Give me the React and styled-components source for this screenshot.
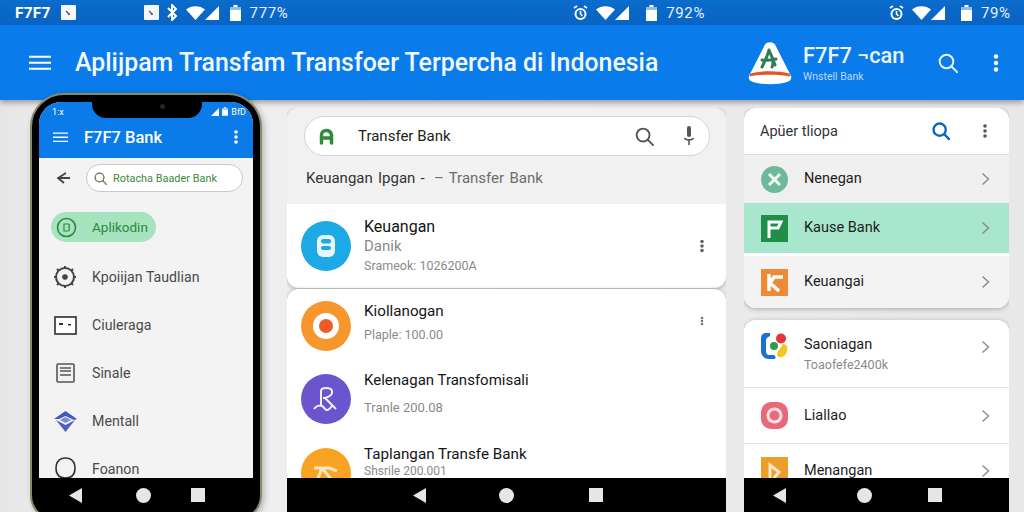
import React from "react";
import styled, { createGlobalStyle } from "styled-components";

const GlobalStyle = createGlobalStyle`
  html, body {
    margin: 0;
    padding: 0;
    height: 512px;
    overflow: hidden;
    background: #ebebeb;
    font-family: Roboto, "Liberation Sans", sans-serif;
  }
  * { box-sizing: border-box; }
`;

const Page = styled.div`
  width: 1024px;
  height: 512px;
  display: flex;
  flex-direction: column;
  background: linear-gradient(90deg, #e6e6e6, #f0f0f0 8%, #ececec 50%, #e8e8e8);
`;

/* top status strip */
const StatusBar = styled.div`
  height: 25px;
  flex: none;
  display: flex;
  align-items: center;
  background: linear-gradient(180deg, #0a6ccb, #0a63c2);
  color: #fff;
  position: relative;
  z-index: 2;
`;

const StatusGroup = styled.div`
  display: flex;
  align-items: center;
  gap: ${(p) => p.$gap || 0}px;
  margin-left: ${(p) => p.$left || 0}px;
`;

const Carrier = styled.span`
  font-size: 15.5px;
  font-weight: 700;
  letter-spacing: 0.2px;
`;

const Percent = styled.span`
  font-size: 15px;
  letter-spacing: 0.6px;
  color: #e8f2fd;
  margin-left: 9px;
`;

/* app bar */
const AppBar = styled.header`
  height: 75px;
  flex: none;
  display: flex;
  align-items: center;
  padding: 0 0 0 29px;
  background: #0a7beb;
  color: #fff;
  box-shadow: 0 2px 6px rgba(0, 0, 0, 0.4);
  position: relative;
  z-index: 1;
`;

const Title = styled.h1`
  margin: 0 0 0 24px;
  width: 673px;
  font-size: 24.9px;
  font-weight: 500;
  white-space: nowrap;
  color: #f2f8ff;
`;

const Brand = styled.div`
  display: flex;
  flex-direction: column;
  margin-left: 11px;
  width: 135px;
`;

const BrandName = styled.span`
  font-size: 21.8px;
  line-height: 25px;
  font-weight: 500;
  white-space: nowrap;
  color: #eaf4ff;
`;

const BrandSub = styled.span`
  font-size: 10.5px;
  line-height: 13px;
  margin-top: 2px;
  color: #b9dafc;
  white-space: nowrap;
`;

const BarIcons = styled.div`
  display: flex;
  align-items: center;
  gap: 34px;
`;

/* three columns under the bar */
const Main = styled.main`
  flex: 1;
  display: flex;
  min-height: 0;
  padding-left: 30px;
`;

const Phone = styled.section`
  width: 232px;
  height: 428px;
  flex: none;
  margin-top: -7px;
  border: 2px solid #8b8a66;
  border-radius: 34px 34px 26px 26px;
  background: #000;
  padding: 7px;
  position: relative;
  z-index: 3;
  box-shadow: 2px 2px 6px rgba(0, 0, 0, 0.25);
`;

const Screen = styled.div`
  height: 100%;
  display: flex;
  flex-direction: column;
  background: #f3f3f3;
  border-radius: 22px 22px 0 0;
  overflow: hidden;
`;

const Notch = styled.div`
  position: absolute;
  top: 0;
  left: 60px;
  width: 110px;
  height: 23px;
  background: #000;
  border-radius: 0 0 14px 14px;
  display: flex;
  align-items: center;
  justify-content: center;
  padding-left: 30px;
`;

const Lens = styled.span`
  width: 5px;
  height: 5px;
  border-radius: 50%;
  background: #1c2733;
`;

const PhoneHead = styled.div`
  flex: none;
  height: 56px;
  background: #0a7be8;
  color: #fff;
  display: flex;
  flex-direction: column;
`;

const PhoneStatus = styled.div`
  height: 18px;
  padding: 1px 7px 0 13px;
  display: flex;
  align-items: center;
  justify-content: space-between;
  font-size: 9px;
`;

const PhoneBar = styled.div`
  flex: 1;
  display: flex;
  align-items: center;
  padding: 0 13px 4px 14px;
`;

const PhoneTitle = styled.span`
  margin-left: 16px;
  flex: 1;
  font-size: 16.5px;
  font-weight: 500;
`;

const PhoneList = styled.div`
  flex: 1;
  min-height: 0;
  overflow: hidden;
  padding-top: 6px;
`;

const SearchRow = styled.div`
  display: flex;
  align-items: center;
  padding: 0 10px 0 17px;
  gap: 15px;
`;

const MiniSearch = styled.div`
  flex: 1;
  height: 28px;
  display: flex;
  align-items: center;
  gap: 6px;
  padding-left: 7px;
  border: 1px solid #c9c9c9;
  border-radius: 14px;
  background: #fff;
  font-size: 10.9px;
  color: #3f8a3c;
  white-space: nowrap;
`;

const ActivePill = styled.div`
  width: 105px;
  height: 30px;
  margin: 20px 0 11px 12px;
  display: flex;
  align-items: center;
  gap: 15px;
  padding-left: 5px;
  border-radius: 15px;
  background: #a7e3bf;
  color: #2b8a3e;
  font-size: 13.5px;
`;

const NavRow = styled.div`
  height: 48px;
  display: flex;
  align-items: center;
  gap: 15px;
  padding-left: 14px;
  font-size: 14.2px;
  color: #4a4a4a;
  white-space: nowrap;
`;

const IconBox = styled.span`
  width: 24px;
  display: flex;
  justify-content: center;
  flex: none;
`;

const SoftNav = styled.nav`
  flex: none;
  height: 34px;
  background: #000;
  display: flex;
  align-items: center;
  padding-left: ${(p) => p.$left}px;
  gap: ${(p) => p.$gap}px;
  svg:last-child {
    margin-left: ${(p) => p.$lastGap - p.$gap}px;
  }
`;

const Column = styled.section`
  width: ${(p) => p.$width}px;
  margin-left: ${(p) => p.$left}px;
  flex: none;
  display: flex;
  flex-direction: column;
  padding-top: 8px;
  min-height: 0;
`;

const Stack = styled.div`
  flex: 1;
  min-height: 0;
  overflow: hidden;
  display: flex;
  flex-direction: column;
  gap: ${(p) => p.$gap}px;
`;

const Card = styled.div`
  flex: ${(p) => (p.$grow ? 1 : "none")};
  background: #fff;
  border-radius: ${(p) => (p.$grow ? "12px 12px 0 0" : "12px")};
  overflow: hidden;
  box-shadow: 0 1px 5px rgba(0, 0, 0, 0.28);
  min-height: 0;
`;

const SearchArea = styled.div`
  height: 96px;
  padding: 8px 16px 0 17px;
  background: #f1f1f1;
`;

const SearchPill = styled.div`
  height: 40px;
  display: flex;
  align-items: center;
  padding: 0 14px;
  border: 1px solid #d4d4d4;
  border-radius: 20px;
  background: #fff;
`;

const SearchText = styled.span`
  flex: 1;
  margin-left: 24px;
  font-size: 15px;
  color: #222;
`;

const Spacer = styled.span`
  width: ${(p) => p.$w}px;
  flex: none;
`;

const Crumb = styled.div`
  margin: 13px 0 0 2px;
  font-size: 15px;
  color: #333;
  word-spacing: 1.5px;
  span { color: #6d6d6d; margin-left: 4px; }
`;

const Item = styled.div`
  height: ${(p) => p.$height}px;
  display: flex;
  align-items: ${(p) => (p.$top ? "flex-start" : "center")};
  padding: 0 20px 0 14px;
  gap: 13px;
`;

const Avatar = styled.span`
  width: 50px;
  height: 50px;
  margin-top: ${(p) => p.$top || 0}px;
  border-radius: 50%;
  background: ${(p) => p.$color};
  display: flex;
  align-items: center;
  justify-content: center;
  flex: none;
`;

const ItemBody = styled.div`
  flex: 1;
  margin-top: ${(p) => p.$top || 0}px;
  display: flex;
  flex-direction: column;
  white-space: nowrap;
`;

const ItemTitle = styled.span`
  font-size: ${(p) => p.$size || 16}px;
  line-height: 20px;
  color: #151515;
`;

const ItemSub = styled.span`
  font-size: ${(p) => p.$size || 12.5}px;
  line-height: ${(p) => p.$line || 18}px;
  margin-top: ${(p) => p.$gap || 0}px;
  color: ${(p) => p.$color || "#8a8a8a"};
`;

const DotsSlot = styled.span`
  display: flex;
  margin-top: ${(p) => p.$top || 0}px;
`;

const PanelHead = styled.div`
  height: 47px;
  display: flex;
  align-items: center;
  padding: 0 20px 0 16px;
  border-bottom: 1px solid #dedede;
`;

const PanelTitle = styled.span`
  flex: 1;
  font-size: 14.5px;
  color: #333;
`;

const PanelRow = styled.div`
  height: ${(p) => p.$height}px;
  margin-top: ${(p) => p.$above || 0}px;
  display: flex;
  align-items: center;
  gap: 16px;
  padding: 0 19px ${(p) => p.$under || 0}px 17px;
  background: ${(p) => p.$bg || "#fff"};
  border-top: ${(p) => (p.$line ? "1px solid #e4e4e4" : "none")};
`;

const PanelIcon = styled.span`
  width: 27px;
  height: 27px;
  flex: none;
  display: flex;
  align-items: center;
  justify-content: center;
  background: ${(p) => p.$color || "transparent"};
  border-radius: ${(p) => p.$radius || 0}px;
`;

const RowBody = styled.div`
  flex: 1;
  margin-top: ${(p) => p.$top || 0}px;
  display: flex;
  flex-direction: column;
  white-space: nowrap;
`;

const RowTitle = styled.span`
  font-size: 14.5px;
  line-height: 18px;
  color: #1d1d1d;
`;

/* icons */
const Menu = ({ size = 22, w = 2 }) => (
  <svg width={size} height={size * 0.7} viewBox="0 0 22 15" fill="none" stroke="currentColor" strokeWidth={w}>
    <path d="M0 1.5h22M0 7.5h22M0 13.5h22" />
  </svg>
);

const Dots = ({ color = "currentColor", r = 2.2, h = 18, gap = 6.5 }) => (
  <svg width="8" height={h} viewBox={`0 0 8 ${h}`} fill={color}>
    <circle cx="4" cy={h / 2 - gap} r={r} />
    <circle cx="4" cy={h / 2} r={r} />
    <circle cx="4" cy={h / 2 + gap} r={r} />
  </svg>
);

const Search = ({ size = 20, color = "currentColor", w = 2 }) => (
  <svg width={size} height={size} viewBox="0 0 20 20" fill="none" stroke={color} strokeWidth={w} strokeLinecap="round">
    <circle cx="8.5" cy="8.5" r="6.8" />
    <path d="M13.5 13.5 19 19" />
  </svg>
);

const Chevron = () => (
  <svg width="9" height="14" viewBox="0 0 9 14" fill="none" stroke="#8b8b8b" strokeWidth="1.4">
    <path d="M1.5 1.5 7.5 7l-6 5.5" />
  </svg>
);

const Wifi = () => (
  <svg width="19" height="14" viewBox="0 0 19 14" fill="#fff">
    <path d="M0 3.5C5-1 14-1 19 3.5L9.5 14z" />
  </svg>
);

const Signal = () => (
  <svg width="14" height="14" viewBox="0 0 14 14" fill="#fff">
    <path d="M14 0v14H0z" />
  </svg>
);

const Battery = ({ w = 11, h = 16 }) => (
  <svg width={w} height={h} viewBox="0 0 11 16">
    <path d="M3.5 0h4v2h3.5v14H0V2h3.5z" fill="#fff" />
    <path d="M0 2h11v3H0z" fill="#8fbcec" />
  </svg>
);

const Chip = () => (
  <svg width="15" height="15" viewBox="0 0 15 15">
    <rect width="15" height="15" rx="1" fill="#f4f8fc" />
    <path d="M5 6l2 2 1 2M7 9h2" stroke="#44566a" strokeWidth="1.3" fill="none" />
  </svg>
);

const Bluetooth = () => (
  <svg width="12" height="17" viewBox="0 0 12 17" fill="none" stroke="#fff" strokeWidth="2">
    <path d="M2 4l8 8-4 4V1l4 4-8 8" />
  </svg>
);

const Alarm = () => (
  <svg width="15" height="16" viewBox="0 0 15 16" fill="none" stroke="#fff" strokeWidth="2">
    <circle cx="7.5" cy="9" r="5" />
    <path d="M1 3l3-2M14 3l-3-2M7.5 6v3l2 2" strokeWidth="1.6" />
  </svg>
);

const Logo = () => (
  <svg width="44" height="44" viewBox="0 0 44 44">
    <path d="M17 3.5C19 .5 25 .5 27 3.5L43 35c1 3-1 5-4 6-10 3-24 3-34 0-3-1-5-3-4-6z" fill="#fff" />
    <path d="M2.5 32.5C14 29.5 30 29.5 41.5 32.5l1 3C30 33 14 33 1.5 35.5z" fill="#e4552b" />
    <path d="M21 9c-1 5-4 11-7 17M21 9c2 5 4 9 6 15M14 19c4 1 9 0 14-1M25 18c0 3 0 7-1 8" fill="none" stroke="#2f7d57" strokeWidth="3" strokeLinecap="round" />
  </svg>
);

const Mic = () => (
  <svg width="12" height="22" viewBox="0 0 12 22" fill="none">
    <rect x="4" y="1" width="4" height="11" rx="2" fill="#555" />
    <path d="M1.5 13c1 2.5 8 2.5 9 0M6 15.5V20" stroke="#555" strokeWidth="1.6" />
  </svg>
);

const Back = () => <svg width="13" height="15" viewBox="0 0 13 15"><path d="M13 0v15L0 7.5z" fill="#e6e6e6" /></svg>;
const Home = () => <svg width="15" height="15" viewBox="0 0 15 15"><circle cx="7.5" cy="7.5" r="7.5" fill="#e6e6e6" /></svg>;
const Recent = () => <svg width="14" height="14" viewBox="0 0 14 14"><rect width="14" height="14" fill="#e6e6e6" /></svg>;

const Buttons = ({ left, gap, lastGap }) => (
  <SoftNav $left={left} $gap={gap} $lastGap={lastGap}>
    <Back />
    <Home />
    <Recent />
  </SoftNav>
);

const StatusIcons = ({ first, label, left, wifiLeft = 8, batteryLeft = 9 }) => (
  <StatusGroup $left={left}>
    {first}
    <StatusGroup $left={wifiLeft}><Wifi /></StatusGroup>
    <Signal />
    <StatusGroup $left={batteryLeft}><Battery /></StatusGroup>
    <Percent>{label}</Percent>
  </StatusGroup>
);

const navItems = [
  {
    label: "Kpoiijan Taudlian",
    icon: (
      <svg width="24" height="24" viewBox="0 0 24 24" fill="none" stroke="#444" strokeWidth="2">
        <circle cx="12" cy="12" r="9" />
        <circle cx="12" cy="12" r="1.8" fill="#444" />
        <path d="M12 1v2M12 21v2M1 12h2M21 12h2M4 4l2 2M18 18l2 2M4 20l2-2M18 6l2-2" />
      </svg>
    ),
  },
  {
    label: "Ciuleraga",
    icon: (
      <svg width="23" height="19" viewBox="0 0 23 19">
        <rect x="1" y="1" width="21" height="17" fill="#fff" stroke="#444" strokeWidth="1.8" />
        <path d="M5 7h4v2H5zM14 8h3v1.5h-3z" fill="#333" />
      </svg>
    ),
  },
  {
    label: "Sinale",
    icon: (
      <svg width="19" height="20" viewBox="0 0 19 20" fill="none" stroke="#555" strokeWidth="1.6">
        <rect x="1" y="1" width="17" height="18" rx="1" />
        <path d="M4 5h11M4 8h11M4 12h11" />
      </svg>
    ),
  },
  {
    label: "Mentall",
    icon: (
      <svg width="23" height="21" viewBox="0 0 23 21">
        <path d="M11.5 0 23 8l-3 1-8.5-4L5 8 0 8z" fill="#4657b5" />
        <path d="M2 9l9.5 5L21 9l-9.5 12z" fill="#4a5fc4" />
        <path d="M6 9l5.5-3L17 9l-5.5 3z" fill="#7d8ad6" />
      </svg>
    ),
  },
  {
    label: "Foanon",
    icon: (
      <svg width="21" height="24" viewBox="0 0 21 24" fill="none" stroke="#333" strokeWidth="1.6">
        <path d="M7 1.5C3 3 1 6 1 11c0 6 3 10 9.5 10S20 17 20 11c0-5-2-8-6-9.5-2-.5-5-.5-7 0z" />
      </svg>
    ),
  },
];

export default function App() {
  return (
    <Page>
      <GlobalStyle />
      <StatusBar>
        <StatusGroup $left={15}><Carrier>F7F7</Carrier></StatusGroup>
        <StatusGroup $left={10}><Chip /></StatusGroup>
        <StatusGroup $left={68}><Chip /></StatusGroup>
        <StatusIcons left={7} first={<Bluetooth />} label="777%" batteryLeft={11} />
        <StatusIcons left={285} first={<Alarm />} label="792%" batteryLeft={17} />
        <StatusIcons left={184} first={<Alarm />} label="79%" batteryLeft={16} />
      </StatusBar>

      <AppBar>
        <Menu />
        <Title>Aplijpam Transfam Transfoer Terpercha di Indonesia</Title>
        <Logo />
        <Brand>
          <BrandName>F7F7 ¬can</BrandName>
          <BrandSub>Wnstell Bank</BrandSub>
        </Brand>
        <BarIcons>
          <Search size={20} color="#eaf4ff" />
          <Dots />
        </BarIcons>
      </AppBar>

      <Main>
        <Phone>
          <Notch><Lens /></Notch>
          <Screen>
            <PhoneHead>
              <PhoneStatus>
                <span>1:x</span>
                <StatusGroup $gap={3}>
                  <svg width="8" height="8" viewBox="0 0 8 8"><path d="M8 0v8H0z" fill="#fff" /></svg>
                  <Battery w={6} h={9} />
                  <span>BfD</span>
                </StatusGroup>
              </PhoneStatus>
              <PhoneBar>
                <Menu size={15} w={2} />
                <PhoneTitle>F7F7 Bank</PhoneTitle>
                <Dots r={1.8} h={14} gap={5} />
              </PhoneBar>
            </PhoneHead>
            <PhoneList>
              <SearchRow>
                <svg width="15" height="12" viewBox="0 0 15 12" fill="none" stroke="#444" strokeWidth="1.8">
                  <path d="M10 1 2 6l6 5M2 6h12" />
                </svg>
                <MiniSearch>
                  <Search size={13} color="#7a6a4a" w={2} />
                  Rotacha Baader Bank
                </MiniSearch>
              </SearchRow>
              <ActivePill>
                <svg width="21" height="21" viewBox="0 0 21 21" fill="none" stroke="#2b8a3e" strokeWidth="1.6">
                  <circle cx="10.5" cy="10.5" r="9" />
                  <path d="M8 7h4c2 0 2 3 0 3.5 2 0 2 3.5 0 3.5H8z" strokeWidth="1.2" />
                </svg>
                Aplikodin
              </ActivePill>
              {navItems.map((item) => (
                <NavRow key={item.label}>
                  <IconBox>{item.icon}</IconBox>
                  {item.label}
                </NavRow>
              ))}
            </PhoneList>
            <Buttons left={30} gap={54} lastGap={40} />
          </Screen>
        </Phone>

        <Column $width={439} $left={25}>
          <Stack $gap={1}>
            <Card>
              <SearchArea>
                <SearchPill>
                  <svg width="15" height="17" viewBox="0 0 15 17" fill="none" stroke="#2e8b3a" strokeWidth="3.5" strokeLinecap="round">
                    <path d="M2.5 15V7c0-6 9-6 10 0v8M3 10h9" />
                  </svg>
                  <SearchText>Transfer Bank</SearchText>
                  <Search size={19} color="#555" />
                  <Spacer $w={29} />
                  <Mic />
                </SearchPill>
                <Crumb>Keuangan Ipgan - <span>– Transfer Bank</span></Crumb>
              </SearchArea>
              <Item $height={84}>
                <Avatar $color="#1da8e6">
                  <svg width="20" height="24" viewBox="0 0 20 24" fill="none">
                    <rect x="1" y="1" width="18" height="22" rx="6" fill="#e7f6fc" />
                    <rect x="5" y="5" width="10" height="4.5" rx="2" fill="#1da8e6" />
                    <rect x="5" y="12" width="10" height="4" rx="2" fill="#1da8e6" />
                  </svg>
                </Avatar>
                <ItemBody>
                  <ItemTitle>Keuangan</ItemTitle>
                  <ItemSub $size={15}>Danik</ItemSub>
                  <ItemSub $gap={2}>Srameok: 1026200A</ItemSub>
                </ItemBody>
                <Dots color="#666" r={1.8} h={14} gap={4.5} />
              </Item>
            </Card>
            <Card $grow>
              <Item $height={85} $top>
                <Avatar $color="#f7962c" $top={12}>
                  <svg width="26" height="26" viewBox="0 0 26 26">
                    <circle cx="13" cy="13" r="13" fill="#fff" />
                    <circle cx="13" cy="13" r="7" fill="#ee5a2a" />
                  </svg>
                </Avatar>
                <ItemBody $top={12}>
                  <ItemTitle $size={15.2}>Kiollanogan</ItemTitle>
                  <ItemSub $gap={5}>Plaple: 100.00</ItemSub>
                </ItemBody>
                <DotsSlot $top={26}>
                  <Dots color="#777" r={1.3} h={12} gap={3} />
                </DotsSlot>
              </Item>
              <Item $height={74} $top>
                <Avatar $color="#6a55cf">
                  <svg width="28" height="28" viewBox="0 0 28 28" fill="none" stroke="#f2efff" strokeWidth="2">
                    <path d="M9 21V6c0-4 10-4 11 0 1 5-6 7-9 7M13 13l11 11M2 24c3-4 8-5 11 0 2 2 4 1 7-3" />
                  </svg>
                </Avatar>
                <ItemBody $top={-4}>
                  <ItemTitle $size={15}>Kelenagan Transfomisali</ItemTitle>
                  <ItemSub $size={13} $gap={9}>Tranle 200.08</ItemSub>
                </ItemBody>
              </Item>
              <Item $height={50} $top>
                <Avatar $color="#f8a422">
                  <svg width="30" height="26" viewBox="0 0 30 26" fill="none" stroke="#fbe5bd" strokeWidth="3">
                    <path d="M3 8h15l8 3M11 8 5 24M11 8l13 16" />
                  </svg>
                </Avatar>
                <ItemBody $top={-4}>
                  <ItemTitle $size={15.2}>Taplangan Transfe Bank</ItemTitle>
                  <ItemSub $size={12} $line={13} $gap={1}>Shsrile 200.001</ItemSub>
                </ItemBody>
              </Item>
            </Card>
          </Stack>
          <Buttons left={126} gap={73} lastGap={75} />
        </Column>

        <Column $width={265} $left={18}>
          <Stack $gap={12}>
            <Card>
              <PanelHead>
                <PanelTitle>Apüer tliopa</PanelTitle>
                <Search size={18} color="#0b63c5" w={2.6} />
                <Spacer $w={31} />
                <Dots color="#555" r={1.8} h={14} gap={5} />
              </PanelHead>
              <PanelRow $height={48} $bg="#f0f0f0">
                <PanelIcon $color="#6fb89c" $radius={14}>
                  <svg width="15" height="15" viewBox="0 0 15 15" stroke="#eef8f3" strokeWidth="3" fill="none"><path d="M2 2l11 11M13 2 2 13" /></svg>
                </PanelIcon>
                <RowBody><RowTitle>Nenegan</RowTitle></RowBody>
                <Chevron />
              </PanelRow>
              <PanelRow $height={50} $bg="#a9e6ce">
                <PanelIcon $color="#1f8e48">
                  <svg width="17" height="19" viewBox="0 0 17 19" fill="none" stroke="#fff" strokeWidth="3">
                    <path d="M3 19V3h12l-3 6H3" />
                  </svg>
                </PanelIcon>
                <RowBody><RowTitle>Kause Bank</RowTitle></RowBody>
                <Chevron />
              </PanelRow>
              <PanelRow $height={52} $bg="#f3f3f3" $above={3}>
                <PanelIcon $color="#ec8a35">
                  <svg width="19" height="19" viewBox="0 0 19 19" fill="none" stroke="#fff" strokeWidth="3.5">
                    <path d="M4 1v17M18 4H9L5 10l9 8" />
                  </svg>
                </PanelIcon>
                <RowBody><RowTitle>Keuangai</RowTitle></RowBody>
                <Chevron />
              </PanelRow>
            </Card>
            <Card $grow>
              <PanelRow $height={67} $under={13}>
                <PanelIcon>
                  <svg width="27" height="28" viewBox="0 0 27 28">
                    <path d="M9 0H5C1 0 0 3 0 6v12c0 4 3 8 8 8h5c2 0 2-3 0-4H9c-3 0-4-1-4-4V7c0-2 2-3 4-4z" fill="#1a6fd8" />
                    <circle cx="20" cy="5.5" r="5" fill="#e5333a" />
                    <circle cx="13" cy="13" r="4" fill="#2f9e4a" />
                    <path d="M22 11c4 0 5 3 4 7s-4 7-8 6c-3-1-2-5 0-7z" fill="#f2c51f" />
                  </svg>
                </PanelIcon>
                <RowBody $top={16}>
                  <RowTitle>Saoniagan</RowTitle>
                  <ItemSub $gap={2}>Toaofefe2400k</ItemSub>
                </RowBody>
                <Chevron />
              </PanelRow>
              <PanelRow $height={56} $line>
                <PanelIcon $color="#e76a7c" $radius={10}>
                  <svg width="19" height="19" viewBox="0 0 19 19" fill="none">
                    <circle cx="9.5" cy="9.5" r="8" fill="#f9dfe3" />
                    <circle cx="9.5" cy="9.5" r="5" fill="#e76a7c" />
                  </svg>
                </PanelIcon>
                <RowBody><RowTitle>Liallao</RowTitle></RowBody>
                <Chevron />
              </PanelRow>
              <PanelRow $height={54} $line>
                <PanelIcon $color="#ee9c2a">
                  <svg width="15" height="19" viewBox="0 0 15 19" fill="none" stroke="#fbe9c9" strokeWidth="3">
                    <path d="M3 19V4l9 7-5 6" />
                  </svg>
                </PanelIcon>
                <RowBody><RowTitle>Menangan</RowTitle></RowBody>
                <Chevron />
              </PanelRow>
            </Card>
          </Stack>
          <Buttons left={29} gap={71} lastGap={56} />
        </Column>
      </Main>
    </Page>
  );
}
